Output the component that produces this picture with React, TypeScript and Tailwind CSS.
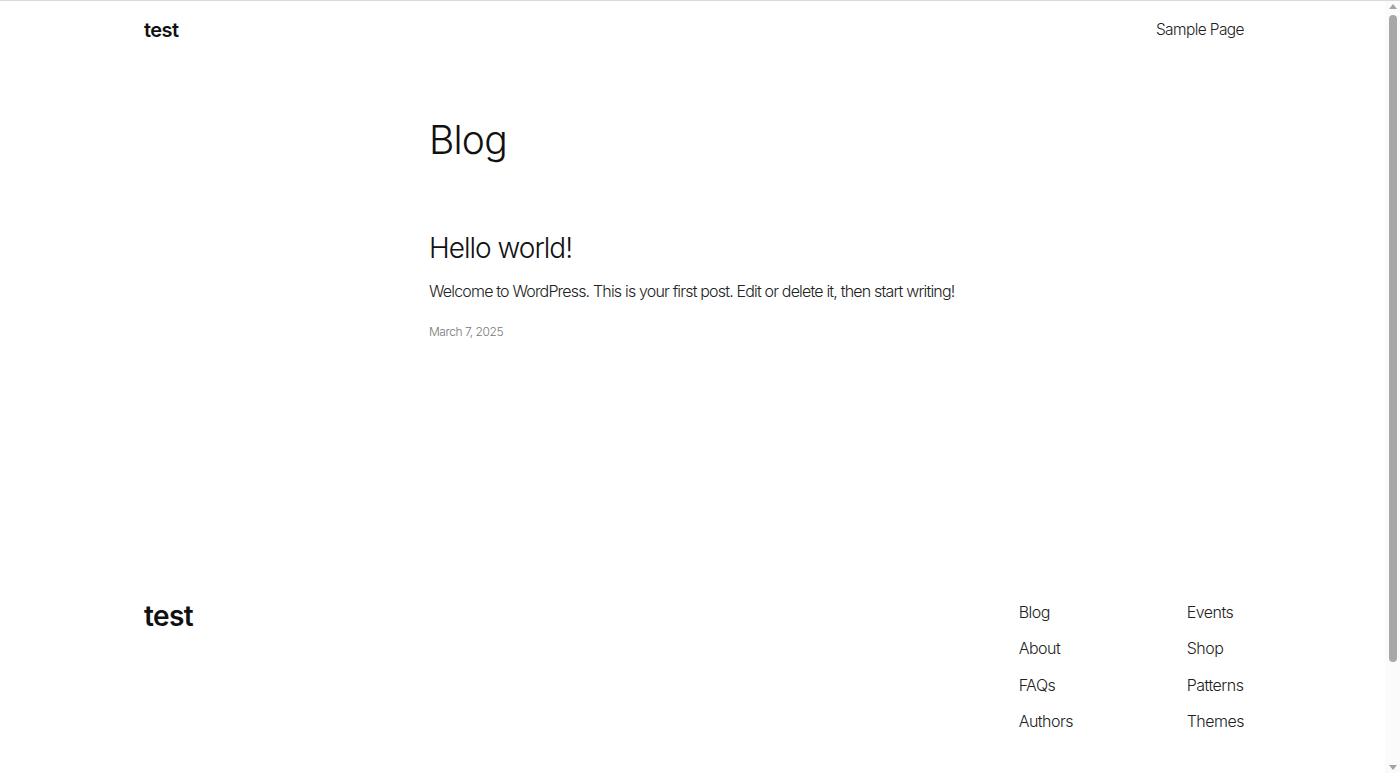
import React from "react";

export default function App() {
  const font = { fontFamily: "Inter, 'Noto Sans', sans-serif" };
  return (
    <div style={font} className="h-[773px] overflow-hidden bg-white text-[#111] border-t border-[#d9d9d9] flex">
      <div className="flex-1 flex flex-col">
        <header className="flex items-center justify-between pl-[144px] pr-[141px] h-[58px]">
          <div className="text-[20px] font-semibold tracking-[-0.6px]">test</div>
          <nav className="text-[15.5px] font-light tracking-[-0.6px] text-[#222]">Sample Page</nav>
        </header>
        <main className="pl-[429px]">
          <h1 className="mt-[61px] text-[39px] font-light leading-none tracking-[-0.8px] h-[39px]">Blog</h1>
          <article className="mt-[75px]">
            <h2 className="text-[28px] font-light leading-none tracking-[-1px] h-[28px]">Hello world!</h2>
            <p className="mt-[17px] text-[16px] leading-[24px] font-light tracking-[-0.82px] text-[#222]">
              Welcome to WordPress. This is your first post. Edit or delete it, then start writing!
            </p>
            <p className="mt-[20px] text-[12px] leading-[18px] font-light tracking-[-0.45px] text-[#777]">March 7, 2025</p>
          </article>
        </main>
        <footer className="flex justify-between items-start pl-[144px] pr-[141px] mt-[259px]">
          <div className="text-[28px] font-semibold tracking-[-0.6px] leading-none mt-[2px]">test</div>
          <div className="flex text-[16px] leading-[24px] font-light tracking-[-0.5px] text-[#222]">
            <ul className="flex flex-col gap-[12.3px] w-[168px]">
              <li>Blog</li>
              <li>About</li>
              <li>FAQs</li>
              <li>Authors</li>
            </ul>
            <ul className="flex flex-col gap-[12.3px]">
              <li>Events</li>
              <li>Shop</li>
              <li>Patterns</li>
              <li>Themes</li>
            </ul>
          </div>
        </footer>
      </div>
      <div className="w-[15px] bg-[#fbfbfb] flex flex-col items-center">
        <svg width="8" height="5" viewBox="0 0 8 5" className="mt-[3px]">
          <polygon points="4,0 8,5 0,5" fill="#a3a3a3" />
        </svg>
        <div className="mt-[6px] w-[8px] h-[647px] rounded-[4px] bg-[#a8a8a8]" />
        <div className="flex-1" />
        <svg width="8" height="5" viewBox="0 0 8 5" className="mb-[3px]">
          <polygon points="0,0 8,0 4,5" fill="#a3a3a3" />
        </svg>
      </div>
    </div>
  );
}
